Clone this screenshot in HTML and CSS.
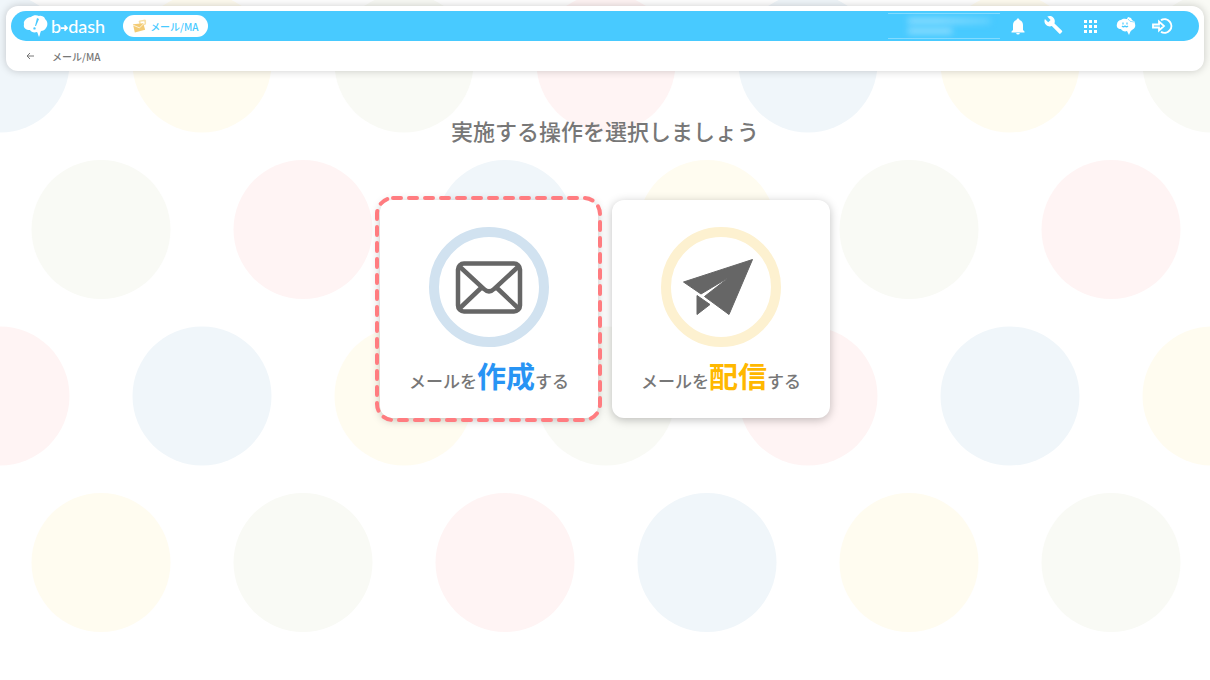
FILE: index.html
```html
<!DOCTYPE html>
<html lang="ja">
<head>
    <meta charset="UTF-8">
    <meta name="viewport" content="width=device-width, initial-scale=1.0">
    <title>メール/MA</title>
    <link rel="stylesheet" href="styles.css">
</head>
<body>
    <!-- Dotted background -->
    <svg class="backdrop" viewBox="0 0 1210 680" preserveAspectRatio="xMidYMin slice" aria-hidden="true">
        <g class="dot-blue">
            <circle cx="0" cy="63" r="69.5"/>
            <circle cx="808" cy="63" r="69.5"/>
            <circle cx="505" cy="229.5" r="69.5"/>
            <circle cx="202" cy="396" r="69.5"/>
            <circle cx="1010" cy="396" r="69.5"/>
            <circle cx="707" cy="562.5" r="69.5"/>
        </g>
        <g class="dot-yellow">
            <circle cx="202" cy="63" r="69.5"/>
            <circle cx="1010" cy="63" r="69.5"/>
            <circle cx="707" cy="229.5" r="69.5"/>
            <circle cx="404" cy="396" r="69.5"/>
            <circle cx="1212" cy="396" r="69.5"/>
            <circle cx="101" cy="562.5" r="69.5"/>
            <circle cx="909" cy="562.5" r="69.5"/>
        </g>
        <g class="dot-green">
            <circle cx="404" cy="63" r="69.5"/>
            <circle cx="1212" cy="63" r="69.5"/>
            <circle cx="101" cy="229.5" r="69.5"/>
            <circle cx="909" cy="229.5" r="69.5"/>
            <circle cx="606" cy="396" r="69.5"/>
            <circle cx="303" cy="562.5" r="69.5"/>
            <circle cx="1111" cy="562.5" r="69.5"/>
        </g>
        <g class="dot-pink">
            <circle cx="606" cy="63" r="69.5"/>
            <circle cx="303" cy="229.5" r="69.5"/>
            <circle cx="1111" cy="229.5" r="69.5"/>
            <circle cx="0" cy="396" r="69.5"/>
            <circle cx="808" cy="396" r="69.5"/>
            <circle cx="505" cy="562.5" r="69.5"/>
        </g>
    </svg>

    <!-- Header -->
    <header class="header">
        <div class="topbar">
            <a class="logo" href="#">
                <svg class="logo-mark" viewBox="0 0 25 22" aria-hidden="true">
                    <path fill="#fff" d="M8 2C10 0 14 0 16 1C20 0 22 3 22 4C25 6 25 11 23 13C22 15 20 16 18 16C17 18 17 20 16 22C15 20 15 18 14 17C11 18 8 17 7 15C3 15 0 13 1 9C0 6 4 2 8 2Z"/>
                    <path fill="#48caff" d="M14 3L16 4L13 11L12 11ZM11.500 12.200A1.200 1.200 0 1 0 12.700 13.400A1.200 1.200 0 0 0 11.500 12.200Z"/>
                </svg>
                <span class="logo-text">b<svg class="logo-arrow" viewBox="0 0 8 8" aria-hidden="true"><path d="M0 4H7M4 1L7 4L4 7"/></svg>dash</span>
            </a>
            <a class="app-pill" href="#">
                <svg class="pill-icon" viewBox="0 0 16 14" aria-hidden="true">
                    <path fill="#f7dfa6" d="M7 2L8 1L14 0L15 1V5L9 8Z"/>
                    <path fill="#fff" d="M9 2.500L13 1.800L13.500 4L9.500 5Z"/>
                    <path fill="#f3cb75" d="M1 5L12 4L14 11L3 14Z"/>
                    <path fill="none" stroke="#fff" stroke-width="0.800" d="M1 6L8 9L13 4"/>
                </svg>
                <span>メール/MA</span>
            </a>
            <div class="account" aria-hidden="true">
                <span class="account-line"></span>
                <span class="account-line short"></span>
            </div>
            <nav class="tools">
                <button class="tool" type="button" aria-label="お知らせ">
                    <svg viewBox="0 0 22 22"><path fill="#fff" d="M11 3.500C12 3.500 12.500 4.200 12.500 5C15 5.700 16 8 16 10V15L17.500 16.500V17.500H4.500V16.500L6 15V10C6 8 7 5.700 9.500 5C9.500 4.200 10 3.500 11 3.500ZM9.200 18H12.800A1.800 1.500 0 0 1 9.200 18Z"/></svg>
                </button>
                <button class="tool" type="button" aria-label="設定">
                    <svg viewBox="0 0 22 22"><path fill="#fff" d="M19 15.800L11.500 8.400C12.200 6.400 11.800 4.200 10.200 2.600C8.600 1 6.200 .7 4.300 1.600L7.600 4.900L5.200 7.200L1.900 3.900C1 5.800 1.400 8.200 3 9.800C4.600 11.400 6.800 11.800 8.800 11.100L16.200 18.600C16.600 19 17.200 19 17.500 18.600L19 17.100C19.400 16.700 19.400 16.100 19 15.800Z"/></svg>
                </button>
                <button class="tool" type="button" aria-label="アプリ一覧">
                    <svg viewBox="0 0 22 22" shape-rendering="crispEdges"><path fill="#fff" d="M5 5h3v3h-3zM10 5h3v3h-3zM15 5h3v3h-3zM5 10h3v3h-3zM10 10h3v3h-3zM15 10h3v3h-3zM5 15h3v3h-3zM10 15h3v3h-3zM15 15h3v3h-3z"/></svg>
                </button>
                <button class="tool" type="button" aria-label="サポート">
                    <svg viewBox="0 0 22 22">
                        <path fill="#fff" d="M6 5C8 3 11 4 12 4L13 2L16 3L17 5L20 7C19 7 20 8 20 9C21 12 19 14 17 15C15 16 15 18 14 20L12 16C10 17 7 16 6 14C3 14 1 12 2 9C2 7 4 5 6 5Z"/>
                        <path fill="none" stroke="#48caff" stroke-width="1.200" d="M8 7.500V9.500M12 7.500V9.500M7 11Q8.500 12.500 10 11Q11.500 12.500 13 11"/>
                        <path fill="none" stroke="#48caff" stroke-width="0.600" d="M13 4Q14 7 19 7"/>
                    </svg>
                </button>
                <button class="tool" type="button" aria-label="ログアウト">
                    <svg viewBox="0 0 22 22">
                        <path fill="none" stroke="#fff" stroke-width="2" d="M10 5.200A6.800 6.800 0 1 1 10 16.800"/>
                        <path fill="none" stroke="#fff" stroke-width="1.800" d="M2 9.500H8V6.500L13 11L8 15.500V12.500H2Z"/>
                    </svg>
                </button>
            </nav>
        </div>
        <div class="breadcrumb">
            <a class="back" href="#" aria-label="戻る">
                <svg viewBox="0 0 8 8"><path d="M8 4H1M4 1L1 4L4 7"/></svg>
            </a>
            <span>メール/MA</span>
        </div>
    </header>

    <!-- Operation selection -->
    <main class="main">
        <h1 class="title">実施する操作を選択しましょう</h1>
        <div class="card-list">
            <a class="card" href="#">
                <svg class="card-outline" viewBox="0 0 228 228" aria-hidden="true">
                    <rect x="2" y="3" width="223" height="222" rx="16"/>
                </svg>
                <span class="ring ring-blue">
                    <svg class="card-icon" viewBox="0 0 76 76" aria-hidden="true">
                        <g fill="none" stroke="#666" stroke-width="4.500">
                            <rect x="7" y="14.500" width="62" height="48" rx="6"/>
                            <path d="M8 17L33 40Q38 45 43 40L68 17M8 60L30 39M68 60L46 39"/>
                        </g>
                    </svg>
                </span>
                <span class="card-label">メールを<strong class="create">作成</strong>する</span>
            </a>
            <a class="card" href="#">
                <span class="ring ring-yellow">
                    <svg class="card-icon" viewBox="0 0 76 76" aria-hidden="true">
                        <g fill="#666" stroke="#666" stroke-linejoin="round">
                            <path d="M.500 33L69.500 10.500L46 65.500L21.500 47.500L46.500 28L18 45Z"/>
                            <path d="M14 46.500L27 55.500L14 65.500Z"/>
                        </g>
                    </svg>
                </span>
                <span class="card-label">メールを<strong class="deliver">配信</strong>する</span>
            </a>
        </div>
    </main>
</body>
</html>
```
FILE: styles.css
```css
/* Root Variables */
:root {
    --sky: #48caff;
    --text: #777;
    --font: "Noto Sans CJK JP", "Noto Sans", sans-serif;
}

/* Global Styles */
* {
    box-sizing: border-box;
}

body {
    margin: 0;
    padding: 6px;
    min-height: 100vh;
    font-family: var(--font);
    color: var(--text);
    background: #fff;
}

a {
    color: inherit;
    text-decoration: none;
}

svg {
    display: block;
}

/* Background */
.backdrop {
    position: absolute;
    inset: 0;
    width: 100%;
    height: 100%;
    z-index: -1;
}

.dot-blue { fill: #f0f6fa; }
.dot-yellow { fill: #fffcf0; }
.dot-green { fill: #f9faf5; }
.dot-pink { fill: #fff4f4; }

/* Header */
.header {
    padding: 5px 5px 0;
    background: #fff;
    border-radius: 12px;
    box-shadow: 0 0 8px rgba(0, 0, 0, 0.2);
}

.topbar {
    display: flex;
    align-items: center;
    height: 30px;
    padding: 0 26px 0 12px;
    border-radius: 15px;
    background: var(--sky);
}

.logo {
    display: flex;
    align-items: center;
    gap: 3px;
    color: #fff;
}

.logo-mark {
    width: 25px;
    height: 22px;
}

.logo-text {
    display: flex;
    align-items: center;
    font-family: Lato, sans-serif;
    font-size: 18px;
    font-weight: 500;
    line-height: 24px;
}

.logo-arrow {
    width: 7px;
    height: 8px;
    margin-top: 4px;
    fill: none;
    stroke: #fff;
    stroke-width: 2;
}

.app-pill {
    display: flex;
    align-items: center;
    gap: 3px;
    height: 22px;
    margin-left: 18px;
    padding: 0 9px;
    border-radius: 11px;
    background: #fff;
    color: var(--sky);
    font-size: 10px;
    font-weight: 500;
}

.pill-icon {
    width: 15px;
    height: 14px;
}

.account {
    display: flex;
    flex-direction: column;
    gap: 4px;
    width: 112px;
    height: 26px;
    margin-left: auto;
    padding: 4px 10px 4px 20px;
    border-top: 1px solid #82dbff;
    border-bottom: 1px solid #82dbff;
}

.account-line {
    height: 6px;
    background: linear-gradient(90deg, #8cddff 35%, #65d2ff);
    filter: blur(3px);
}

.account-line.short {
    width: 44px;
    background: #8cddff;
}

.tools {
    display: flex;
    gap: 14px;
    margin-left: 7px;
}

.tool {
    width: 22px;
    height: 22px;
    padding: 0;
    border: none;
    background: none;
    cursor: pointer;
}

.breadcrumb {
    display: flex;
    align-items: center;
    gap: 18px;
    height: 30px;
    padding-left: 15px;
    font-size: 10px;
    font-weight: 500;
}

.back svg {
    width: 8px;
    height: 8px;
    fill: none;
    stroke: var(--text);
}

/* Operation selection */
.main {
    padding-top: 44px;
}

.title {
    margin: 0 0 55px;
    font-size: 22px;
    font-weight: 500;
    line-height: 30px;
    text-align: center;
}

.card-list {
    display: flex;
    justify-content: center;
    flex-wrap: wrap;
    gap: 14px;
}

.card {
    position: relative;
    display: flex;
    flex-direction: column;
    align-items: center;
    width: 218px;
    padding: 27px 0 15px;
    border-radius: 12px;
    background: #fff;
    box-shadow: 0 2px 10px rgba(0, 0, 0, 0.25);
}

.card-outline {
    position: absolute;
    inset: -5px;
    fill: none;
    stroke: #ff7c80;
    stroke-width: 4;
    stroke-linecap: round;
    stroke-dasharray: 8 8;
}

.ring {
    display: flex;
    align-items: center;
    justify-content: center;
    width: 120px;
    height: 120px;
    border: 10px solid;
    border-radius: 50%;
}

.ring-blue { border-color: #d1e2f0; }
.ring-yellow { border-color: #fdf1d0; }

.card-icon {
    width: 76px;
    height: 76px;
}

.card-label {
    margin-top: 6px;
    font-size: 17px;
    font-weight: 500;
    line-height: 44px;
    white-space: nowrap;
}

.card-label strong {
    font-size: 29px;
    font-weight: 700;
}

.create { color: #2894f4; }
.deliver { color: #ffb800; }
```
